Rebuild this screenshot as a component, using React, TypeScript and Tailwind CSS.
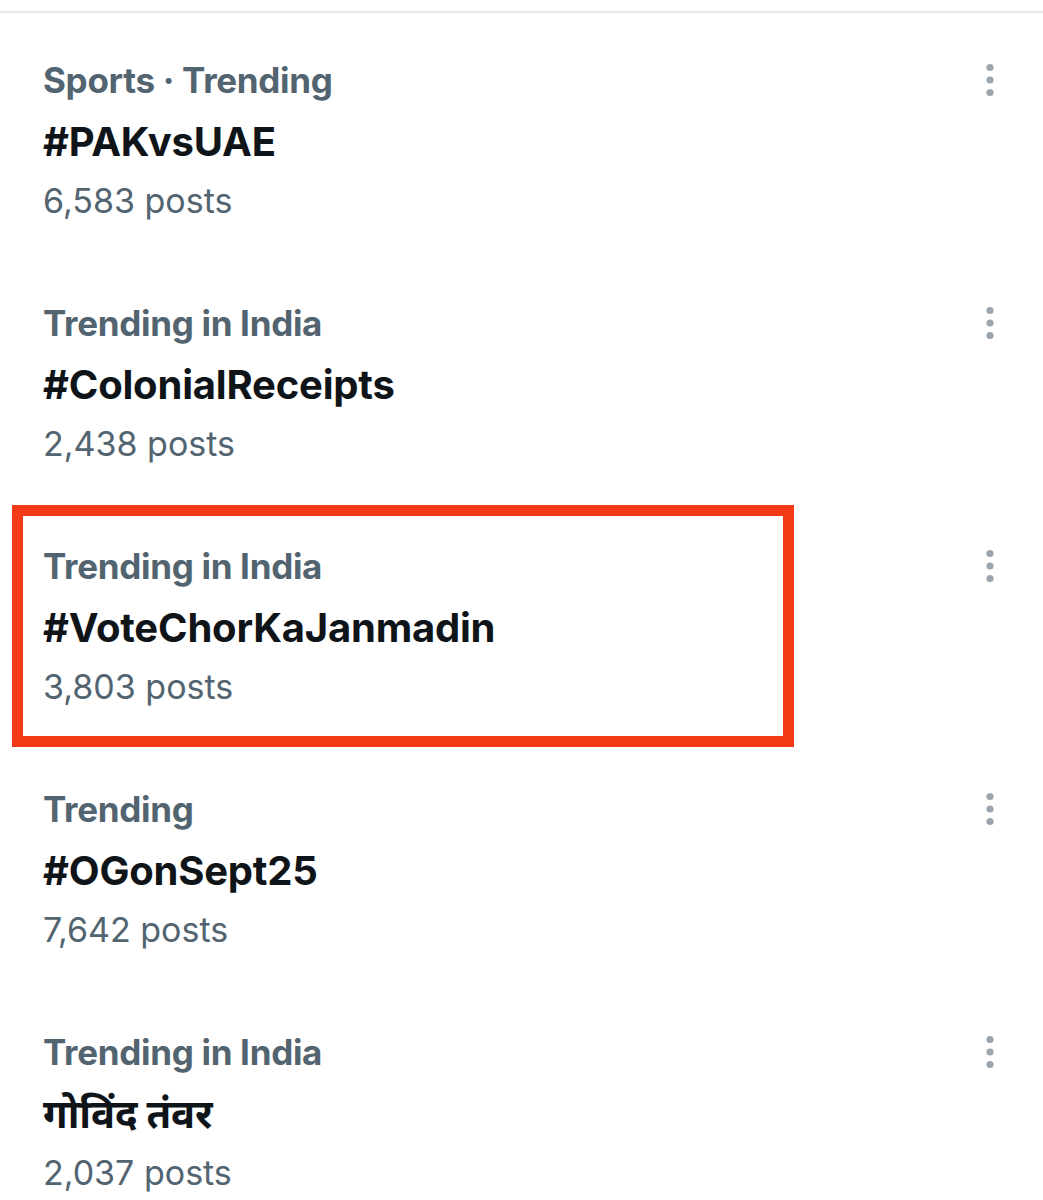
import { useState } from 'react';

type Trend = {
  category: string;
  title: string;
  posts: string;
  highlighted?: boolean;
};

const trends: Trend[] = [
  { category: 'Sports · Trending', title: '#PAKvsUAE', posts: '6,583 posts' },
  { category: 'Trending in India', title: '#ColonialReceipts', posts: '2,438 posts' },
  { category: 'Trending in India', title: '#VoteChorKaJanmadin', posts: '3,803 posts', highlighted: true },
  { category: 'Trending', title: '#OGonSept25', posts: '7,642 posts' },
  { category: 'Trending in India', title: 'गोविंद तंवर', posts: '2,037 posts' },
];

function MoreIcon() {
  return (
    <svg className="w-[16px] h-[40px]" viewBox="0 0 16 40" fill="#9ca5ae">
      <circle cx="8" cy="7.5" r="3.6" />
      <circle cx="8" cy="20" r="3.6" />
      <circle cx="8" cy="32.5" r="3.6" />
    </svg>
  );
}

function TrendRow({ trend }: { trend: Trend }) {
  return (
    <div className="relative h-[243px] pl-[43px] pr-[45px]">
      {/* red annotation box */}
      {trend.highlighted && (
        <div className="absolute left-[12px] top-[-30px] w-[782px] h-[242px] border-[11px] border-[#f23a16] pointer-events-none" />
      )}
      <div className="flex items-start justify-between">
        <div className="flex flex-col">
          <div className="h-[62px] leading-[62px] text-[35px] font-bold text-[#536471] tracking-[-0.3px]">
            {trend.category}
          </div>
          <div className="h-[60px] leading-[62px] text-[40px] font-bold text-[#0f1419] tracking-[-0.2px]">
            {trend.title}
          </div>
          <div className="h-[60px] leading-[60px] text-[34px] text-[#536471]">{trend.posts}</div>
        </div>
        <button className="mt-[11px]" aria-label="More">
          <MoreIcon />
        </button>
      </div>
    </div>
  );
}

export default function App() {
  const [items] = useState(trends);

  return (
    <div
      className="w-[1043px] h-[1200px] overflow-hidden bg-white"
      style={{ fontFamily: '"Inter", "Noto Sans", "Noto Sans CJK SC", sans-serif' }}
    >
      <div className="h-[11px]" />
      <div className="h-[2px] bg-[#e7eaeb]" />
      <div className="pt-[36px]">
        {items.map((t, i) => (
          <TrendRow key={i} trend={t} />
        ))}
      </div>
    </div>
  );
}
